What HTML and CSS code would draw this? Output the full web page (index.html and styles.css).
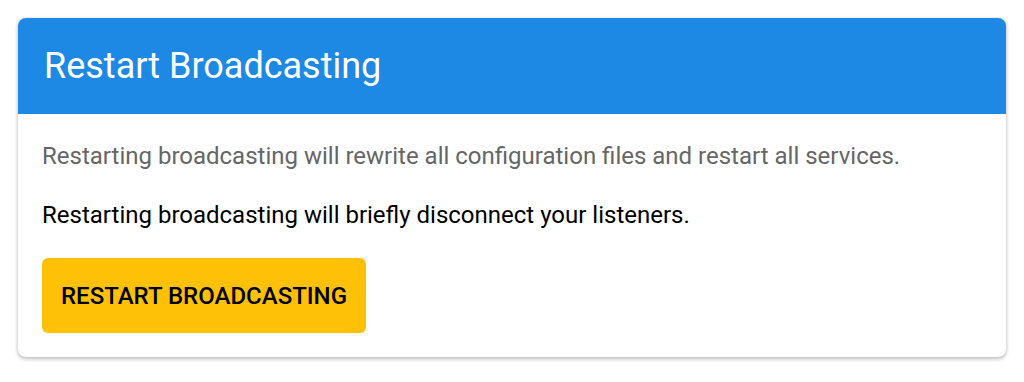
FILE: index.html
```html
<!DOCTYPE html>
<html lang="en">
<head>
    <meta charset="UTF-8">
    <title>Restart Broadcasting</title>
    <link rel="stylesheet" href="styles.css">
</head>
<body>
    <!-- Restart broadcasting card -->
    <div class="card">
        <div class="card-header">Restart Broadcasting</div>
        <div class="card-body">
            <p class="note">Restarting broadcasting will rewrite all configuration files and restart all services.</p>
            <p class="warning">Restarting broadcasting will briefly disconnect your listeners.</p>
            <button class="restart-button">Restart Broadcasting</button>
        </div>
    </div>
</body>
</html>
```

FILE: styles.css
```css
/* Page */
body {
    margin: 0;
    padding: 18px;
    background: #fff;
    font-family: Roboto, "Liberation Sans", sans-serif;
}

/* Card */
.card {
    background: #fff;
    border-radius: 8px;
    overflow: hidden;
    box-shadow: 0 2px 4px rgba(0, 0, 0, 0.25), 0 0 3px rgba(0, 0, 0, 0.1);
}

.card-header {
    background: #1e88e5;
    color: #fff;
    font-size: 36px;
    height: 96px;
    display: flex;
    align-items: center;
    padding: 0 26px;
}

.card-body {
    padding: 28px 24px 24px;
}

.card-body .note,
.card-body .warning {
    margin: 0;
    font-size: 24px;
    line-height: 28px;
}

.card-body .note {
    color: #666;
    margin-bottom: 31px;
}

.card-body .warning {
    color: #000;
    margin-bottom: 29px;
}

/* Button */
.restart-button {
    display: block;
    background: #ffc107;
    border: none;
    border-radius: 6px;
    width: 324px;
    height: 75px;
    font-family: inherit;
    font-size: 24px;
    font-weight: 500;
    text-transform: uppercase;
    color: #000;
    cursor: pointer;
}
```
